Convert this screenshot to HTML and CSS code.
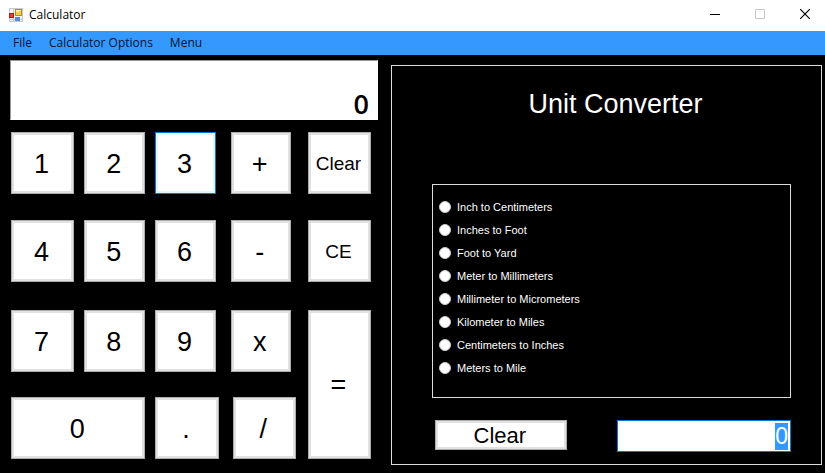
FILE: index.html
```html
<!DOCTYPE html>
<html lang="en">
<head>
<meta charset="utf-8">
<title>Calculator</title>
<link rel="stylesheet" href="styles.css">
</head>
<body>
<header class="titlebar">
  <svg class="app-icon" width="14" height="14" viewBox="0 0 14 14" aria-hidden="true">
    <rect x="0.5" y="0.5" width="13" height="13" fill="#f4f4f4" stroke="#c4c8cc"/>
    <path d="M4.5 1v12M1 11.5h12" stroke="#c4c8cc"/>
    <rect x="0.500" y="5.500" width="4" height="4" fill="#d8433c" stroke="#9b2020"/>
    <rect x="6.500" y="1.500" width="6" height="6" fill="#f3cb4e" stroke="#b68d24"/>
    <path d="M7 2.500h5M7 3.500h3" stroke="#fbe9a6"/>
    <rect x="6" y="9" width="5" height="4" fill="#5b8be0"/>
  </svg>
  <h1 class="window-title">Calculator</h1>
  <div class="window-buttons">
    <button class="window-button" type="button" aria-label="Minimize"><svg width="10" height="10" viewBox="0 0 10 10"><path d="M0 5.500h10" stroke="#000"/></svg></button>
    <button class="window-button" type="button" aria-label="Maximize" disabled><svg width="10" height="10" viewBox="0 0 10 10"><path d="M.5.5h9v9h-9z" fill="none" stroke="#c8c8c8"/></svg></button>
    <button class="window-button" type="button" aria-label="Close"><svg width="10" height="10" viewBox="0 0 10 10"><path d="M0 0l10 10M10 0L0 10" stroke="#000" stroke-width="1.2"/></svg></button>
  </div>
</header>
<nav class="menubar">
  <button class="menu-item" type="button">File</button>
  <button class="menu-item" type="button">Calculator Options</button>
  <button class="menu-item" type="button">Menu</button>
</nav>
<main class="workspace">
  <section class="calculator">
    <input class="display" type="text" value="0" aria-label="Result">
    <div class="keypad">
      <div class="keys digits">
        <button class="key" type="button">1</button>
        <button class="key" type="button">2</button>
        <button class="key key-inset key-active" type="button">3</button>
        <button class="key" type="button">4</button>
        <button class="key" type="button">5</button>
        <button class="key key-inset" type="button">6</button>
        <button class="key" type="button">7</button>
        <button class="key" type="button">8</button>
        <button class="key key-inset" type="button">9</button>
        <button class="key key-wide" type="button">0</button>
        <button class="key" type="button">.</button>
      </div>
      <div class="keys operators">
        <button class="key" type="button">+</button>
        <button class="key" type="button">-</button>
        <button class="key" type="button">x</button>
        <button class="key key-divide" type="button">/</button>
      </div>
      <div class="keys actions">
        <button class="key key-word" type="button">Clear</button>
        <button class="key key-word" type="button">CE</button>
        <button class="key key-tall" type="button">=</button>
      </div>
    </div>
  </section>
  <section class="converter">
    <h2 class="converter-title">Unit Converter</h2>
    <fieldset class="units" aria-label="Conversion">
      <label class="unit"><input class="radio" type="radio" name="unit">Inch to Centimeters</label>
      <label class="unit"><input class="radio" type="radio" name="unit">Inches to Foot</label>
      <label class="unit"><input class="radio" type="radio" name="unit">Foot to Yard</label>
      <label class="unit"><input class="radio" type="radio" name="unit">Meter to Millimeters</label>
      <label class="unit"><input class="radio" type="radio" name="unit">Millimeter to Micrometers</label>
      <label class="unit"><input class="radio" type="radio" name="unit">Kilometer to Miles</label>
      <label class="unit"><input class="radio" type="radio" name="unit">Centimeters to Inches</label>
      <label class="unit"><input class="radio" type="radio" name="unit">Meters to Mile</label>
    </fieldset>
    <div class="converter-actions">
      <button class="key clear-button" type="button">Clear</button>
      <input class="amount" id="amount" type="text" value="0" aria-label="Value to convert">
    </div>
  </section>
</main>
<script src="script.js"></script>
</body>
</html>
```
FILE: styles.css
```css
* {
  box-sizing: border-box;
}

body {
  margin: 0;
  min-height: 100vh;
  display: flex;
  flex-direction: column;
  background: #000;
  font-family: "Liberation Sans", Arial, sans-serif;
}

button,
input {
  margin: 0;
  font-family: inherit;
}

.titlebar {
  display: flex;
  align-items: center;
  height: 31px;
  padding: 0 0 2px 9px;
  background: #fff;
  color: #000;
}

.app-icon {
  margin-right: 6px;
}

.window-title,
.menu-item {
  font-family: "Open Sans", "Noto Sans", sans-serif;
  font-size: 12px;
  font-weight: 400;
}

.window-title {
  margin: 0;
}

.window-buttons {
  display: flex;
  margin-left: auto;
  align-self: stretch;
}

.window-button {
  display: flex;
  align-items: center;
  justify-content: center;
  width: 45px;
  padding: 0 0 2px 4px;
  border: 0;
  background: none;
}

.menubar {
  display: flex;
  gap: 17px;
  height: 24px;
  padding: 0 0 1px 13px;
  background: #3399ff;
}

.menu-item {
  padding: 0;
  border: 0;
  background: none;
  color: #06102e;
}

.workspace {
  flex: 1;
  display: grid;
  grid-template-columns: 368fr 431fr;
  gap: 13px;
  align-items: start;
  padding: 5px 3px 8px 10px;
}

.display {
  display: block;
  width: 100%;
  height: 60px;
  padding: 26px 8px 0;
  border: 1px solid #fff;
  border-top-color: #999;
  border-left-color: #999;
  background: #fff;
  font-family: "Open Sans", "Noto Sans", sans-serif;
  font-size: 27px;
  font-weight: 600;
  text-align: right;
}

.keypad {
  display: grid;
  grid-template-columns: 207fr 65fr 63fr;
  gap: 12px;
  margin: 12px 7px 0 1px;
}

.keys {
  display: grid;
  grid-template-rows: 88px 90px 87px 62px;
}

.digits {
  grid-template-columns: 63fr 61fr 63fr;
  column-gap: 10px;
}

.key {
  min-width: 0;
  height: 62px;
  padding: 2px 2px 0 0;
  border: 1px solid #adadad;
  box-shadow: inset 0 0 0 2px #e1e1e1;
  background: #fff;
  color: #000;
  font-size: 27px;
}

.key-inset {
  margin-right: 3px;
}

.key-active {
  border-color: #0078d7;
  box-shadow: inset 0 0 0 2px #e5f5ff;
}

.key-wide {
  grid-column: span 2;
}

.key-tall {
  grid-row: span 2;
  height: 149px;
}

.key-word {
  font-size: 19px;
}

.operators .key {
  margin-right: 5px;
}

.operators .key-divide {
  margin-right: 0;
  margin-left: 2px;
}

.converter {
  margin-top: 5px;
  padding: 22px 30px 12px 40px;
  border: 1px solid #dcdcdc;
  color: #fff;
}

.converter-title {
  margin: 0 0 64px;
  padding-left: 8px;
  font-size: 27px;
  line-height: 32px;
  font-weight: 400;
  text-align: center;
}

.units {
  display: flex;
  flex-direction: column;
  min-width: 0;
  height: 214px;
  margin: 0;
  padding: 10px 6px;
  border: 1px solid #dcdcdc;
}

.unit {
  display: flex;
  align-items: center;
  gap: 6px;
  height: 23px;
  font-size: 11px;
}

.radio {
  appearance: none;
  width: 12px;
  height: 12px;
  border: 1px solid #ccc;
  border-radius: 50%;
  background: #fff;
}

.radio:checked {
  background: radial-gradient(#333 3px, #fff 4px);
}

.converter-actions {
  display: flex;
  justify-content: space-between;
  align-items: flex-start;
  margin-top: 22px;
  padding-left: 3px;
}

.clear-button {
  width: 37%;
  height: 30px;
  font-size: 22px;
}

.amount {
  width: 49%;
  height: 32px;
  padding: 0 2px;
  border: 1px solid #0078d7;
  outline: 0;
  background: #fff;
  font-size: 23px;
  text-align: right;
}

.amount::selection {
  background: #3399ff;
  color: #fff;
}
```
FILE: script.js
```js
const amount = document.getElementById("amount");
amount.focus();
amount.select();
```
